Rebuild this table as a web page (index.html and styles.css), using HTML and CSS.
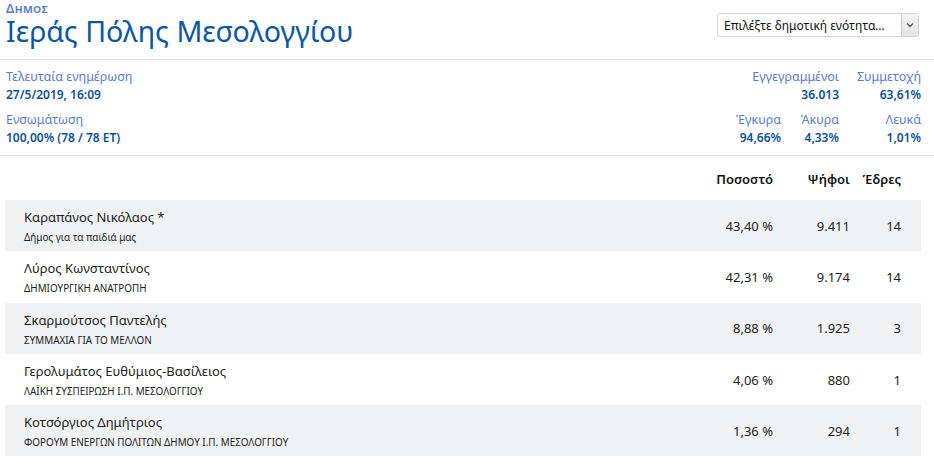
FILE: index.html
```html
<!DOCTYPE html>
<html lang="el">
<head>
<meta charset="utf-8">
<link rel="stylesheet" href="styles.css">
</head>
<body>
<header class="top">
  <div class="titles">
    <div class="kicker">Δημος</div>
    <h1 class="title">Ιεράς Πόλης Μεσολογγίου</h1>
  </div>
  <div class="select">
    <span class="select-text">Επιλέξτε δημοτική ενότητα...</span>
    <span class="select-btn">
      <svg width="8" height="6" viewBox="0 0 8 6"><path d="M1 1.5 L4 4.5 L7 1.5" fill="none" stroke="#555" stroke-width="1.4"/></svg>
    </span>
  </div>
</header>
<section class="info">
  <div class="info-left">
    <div class="stat">
      <div class="lbl">Τελευταία ενημέρωση</div>
      <div class="val">27/5/2019, 16:09</div>
    </div>
    <div class="stat">
      <div class="lbl">Ενσωμάτωση</div>
      <div class="val">100,00% (78 / 78 ΕΤ)</div>
    </div>
  </div>
  <div class="info-right">
    <div class="lbl span2">Εγγεγραμμένοι</div>
    <div class="lbl">Συμμετοχή</div>
    <div class="val span2">36.013</div>
    <div class="val">63,61%</div>
    <div class="lbl gap">Έγκυρα</div>
    <div class="lbl gap">Άκυρα</div>
    <div class="lbl gap">Λευκά</div>
    <div class="val">94,66%</div>
    <div class="val">4,33%</div>
    <div class="val">1,01%</div>
  </div>
</section>
<section class="results">
  <div class="row head">
    <div></div>
    <div class="num">Ποσοστό</div>
    <div class="num">Ψήφοι</div>
    <div class="num">Έδρες</div>
  </div>
  <div class="row alt">
    <div class="who"><div class="name">Καραπάνος Νικόλαος *</div><div class="party">Δήμος για τα παιδιά μας</div></div>
    <div class="num">43,40 %</div><div class="num">9.411</div><div class="num">14</div>
  </div>
  <div class="row">
    <div class="who"><div class="name">Λύρος Κωνσταντίνος</div><div class="party">ΔΗΜΙΟΥΡΓΙΚΗ ΑΝΑΤΡΟΠΗ</div></div>
    <div class="num">42,31 %</div><div class="num">9.174</div><div class="num">14</div>
  </div>
  <div class="row alt">
    <div class="who"><div class="name">Σκαρμούτσος Παντελής</div><div class="party">ΣΥΜΜΑΧΙΑ ΓΙΑ ΤΟ ΜΕΛΛΟΝ</div></div>
    <div class="num">8,88 %</div><div class="num">1.925</div><div class="num">3</div>
  </div>
  <div class="row">
    <div class="who"><div class="name">Γερολυμάτος Ευθύμιος-Βασίλειος</div><div class="party">ΛΑΪΚΗ ΣΥΣΠΕΙΡΩΣΗ Ι.Π. ΜΕΣΟΛΟΓΓΙΟΥ</div></div>
    <div class="num">4,06 %</div><div class="num">880</div><div class="num">1</div>
  </div>
  <div class="row alt">
    <div class="who"><div class="name">Κοτσόργιος Δημήτριος</div><div class="party">ΦΟΡΟΥΜ ΕΝΕΡΓΩΝ ΠΟΛΙΤΩΝ ΔΗΜΟΥ Ι.Π. ΜΕΣΟΛΟΓΓΙΟΥ</div></div>
    <div class="num">1,36 %</div><div class="num">294</div><div class="num">1</div>
  </div>
  <div class="row foot">
    <div></div><div></div><div class="num">24</div><div></div>
  </div>
</section>
</body>
</html>
```
FILE: styles.css
```css
* { box-sizing: border-box; }
html, body { margin: 0; padding: 0; background: #fff; }
body {
  font-family: "Noto Sans", "Open Sans", sans-serif;
  color: #222;
  width: 934px;
  height: 470px;
  overflow: hidden;
}
.top {
  display: flex;
  justify-content: space-between;
  align-items: flex-start;
  height: 60px;
  padding: 0 15px 0 6px;
  border-bottom: 1px solid #e1e2e6;
}
.kicker {
  font-size: 12.5px;
  line-height: 11px;
  font-variant: small-caps;
  letter-spacing: 0.4px;
  color: #5a7bd1;
  padding-top: 3px;
  font-weight: 600;
}
.title {
  margin: 2px 0 0;
  font-size: 28.6px;
  line-height: 30px;
  font-weight: 400;
  color: #0b57a4;
}
.select {
  margin-top: 13px;
  width: 202px;
  height: 24px;
  border: 1px solid #cfd2d8;
  border-radius: 3px;
  display: flex;
  align-items: center;
  font-size: 12px;
  color: #111;
}
.select-text { flex: 1; padding-left: 6px; white-space: nowrap; overflow: hidden; }
.select-btn {
  width: 17px;
  height: 22px;
  border-left: 1px solid #c6c9ce;
  background: linear-gradient(#f5f5f5, #e4e4e4);
  display: flex;
  align-items: center;
  justify-content: center;
}
.info {
  display: flex;
  justify-content: space-between;
  padding: 8px 13px 8px 6px;
  border-bottom: 1px solid #e1e2e6;
  font-size: 12.5px;
  line-height: 18px;
}
.stat + .stat { margin-top: 7px; }
.lbl { color: #5a7bd1; }
.val { color: #0d5099; font-weight: 600; font-size: 12px; }
.info-right {
  display: grid;
  grid-template-columns: 60px 58px 82px;
  text-align: right;
}
.span2 { grid-column: span 2; }
.gap { margin-top: 7px; }
.results {
  padding: 14px 13px 0 5px;
}
.row {
  display: grid;
  grid-template-columns: 1fr 80px 77px 51px;
  padding-right: 20px;
  align-items: center;
  height: 51.3px;
  font-size: 13px;
}
.row.head {
  height: 30px;
  font-weight: 600;
  color: #111;
  align-items: start;
}
.row.alt { background: #f0f1f3; }
.num { text-align: right; }
.who { padding-left: 19px; }
.name { font-size: 13px; line-height: 18px; color: #222; }
.party { font-size: 9.9px; line-height: 12px; margin-top: 5px; color: #222; }
.row.foot { align-items: end; height: 18px; }
.row.foot .num { transform: translateY(14px); }
```
